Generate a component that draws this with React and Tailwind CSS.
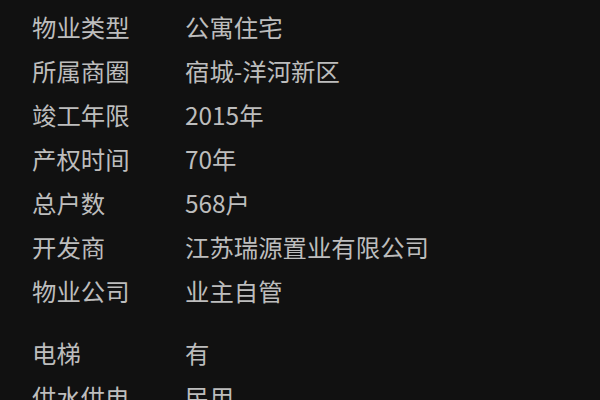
import React from 'react';

// Property info list, first group then utilities group
const mainRows = [
  ['物业类型', '公寓住宅'],
  ['所属商圈', '宿城-洋河新区'],
  ['竣工年限', '2015年'],
  ['产权时间', '70年'],
  ['总户数', '568户'],
  ['开发商', '江苏瑞源置业有限公司'],
  ['物业公司', '业主自管'],
];

const extraRows = [
  ['电梯', '有'],
  ['供水供电', '民用'],
];

const InfoRow = ({ label, value }) => (
  <div className="flex h-[44px] items-center">
    <div className="w-[153px] shrink-0">{label}</div>
    <div>{value}</div>
  </div>
);

const App = () => {
  return (
    <div
      className="w-[600px] h-[400px] overflow-hidden bg-[#111111] text-[#bdbdbd] text-[24.4px] leading-none pl-[32px] pt-[5px]"
      style={{ fontFamily: '"Noto Sans CJK SC", "Noto Sans", sans-serif' }}
    >
      <div className="flex flex-col">
        {mainRows.map(([label, value]) => (
          <InfoRow key={label} label={label} value={value} />
        ))}
      </div>
      <div className="flex flex-col mt-[18px]">
        {extraRows.map(([label, value]) => (
          <InfoRow key={label} label={label} value={value} />
        ))}
      </div>
    </div>
  );
};

export default App;
